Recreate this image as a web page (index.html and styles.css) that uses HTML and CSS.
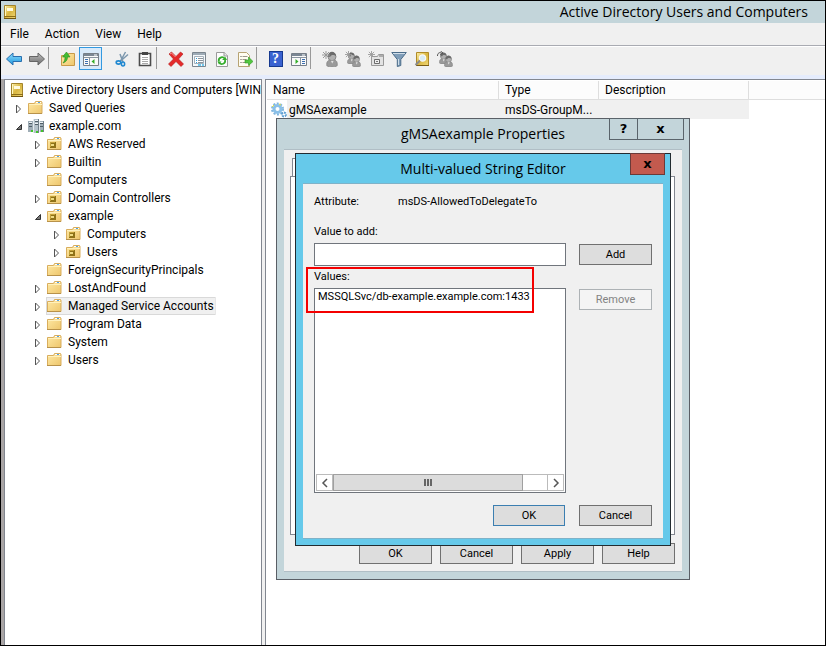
FILE: index.html
```html
<!DOCTYPE html>
<html lang="en">
<head>
<meta charset="utf-8">
<title>Active Directory Users and Computers</title>
<link rel="stylesheet" href="styles.css">
</head>
<body>
<svg class="defs" aria-hidden="true">
  <defs>
    <linearGradient id="gold" x1="0" y1="0" x2="1" y2="1"><stop offset="0" stop-color="#ffeaa6"/><stop offset="1" stop-color="#eec66c"/></linearGradient>
    <linearGradient id="book-fill" x1="0" y1="0" x2="1" y2="1"><stop offset="0" stop-color="#fdf0a8"/><stop offset=".5" stop-color="#d9b640"/><stop offset="1" stop-color="#f0d878"/></linearGradient>
    <linearGradient id="blue-fill" x1="0" y1="0" x2="0" y2="1"><stop offset="0" stop-color="#8fdcfa"/><stop offset="1" stop-color="#1d97e0"/></linearGradient>
    <linearGradient id="gray-fill" x1="0" y1="0" x2="0" y2="1"><stop offset="0" stop-color="#bdbdbd"/><stop offset="1" stop-color="#6c6c6c"/></linearGradient>
    <symbol id="folder" viewBox="0 0 16 16">
      <path d="M.5 3.500h6l1-2h6l.5 1V13.500H.5z" fill="url(#gold)" stroke="#d9ad5c"/>
      <path d="M8 2h5v1H8z" fill="#fff"/><path d="M10 2h2v1h-2z" fill="#4fa3e8"/>
      <path d="M1 4.500h13" stroke="#fff1bd"/><path d="M0 13.500h14" stroke="#b8924a"/>
    </symbol>
    <symbol id="ou" viewBox="0 0 16 16">
      <use href="#folder"/>
      <path d="M3 6h6v6H3z" fill="#8f7218"/><path d="M3 6h5v1H3zM3 7h1v4H3z" fill="#c2a23a"/><path d="M4 8h3v2H4z" fill="#f0dc84"/>
    </symbol>
    <symbol id="book" viewBox="0 0 16 16">
      <path d="M2.500 1.500h11v13h-11z" fill="url(#book-fill)" stroke="#a3842c"/>
      <path d="M5 4h6v3H5z" fill="#fffbe0"/><path d="M2 12.500h12" stroke="#8c6d18"/><path d="M2 14.500h12" stroke="#6f5512"/><path d="M3.500 2v10" stroke="#fff7c0"/>
    </symbol>
    <symbol id="domain" viewBox="0 0 16 16">
      <path d="M0 3h5v11H0zM11 3h5v11h-5z" fill="#9fadb6"/><path d="M5 1h6v14H5z" fill="#b4c1c9"/>
      <path d="M5.500 1v14M11.500 3v11" stroke="#e3eaee"/><path d="M10.500 1v14M15.500 3v11" stroke="#72818a"/>
      <path d="M1 5.500h3M12 5.500h3M7 3.500h3M7 6.500h3M1 8.500h3M12 8.500h3" stroke="#4f5d66"/>
      <path d="M1 4.500h3M12 4.500h3M7 2.500h3M7 5.500h3" stroke="#eef3f6"/>
      <path d="M3 12h2v2H3zM13 12h2v2h-2zM8 13h2v2H8z" fill="#42c52c"/>
    </symbol>
    <symbol id="closed" viewBox="0 0 8 10"><path d="M1.500 1v8l4-4z" fill="#fff" stroke="#555"/></symbol>
    <symbol id="open" viewBox="0 0 8 10"><path d="M6.500 2.500v5h-5z" fill="#777" stroke="#333"/></symbol>
    <symbol id="gear" viewBox="0 0 16 16">
      <circle cx="6.500" cy="7" r="5.500" fill="none" stroke="#7fb5df" stroke-width="2" stroke-dasharray="2 1.500"/>
      <circle cx="6.500" cy="7" r="3.500" fill="#fff" stroke="#8ac0e8" stroke-width="3"/>
      <circle cx="13" cy="12.500" r="2" fill="#fff" stroke="#5f9fd2" stroke-width="2" stroke-dasharray="2 .8"/>
      <path d="M1 5l2-2M8 2l2 1" stroke="#e6e23c"/>
    </symbol>
    <symbol id="person" viewBox="0 0 10 14">
      <path d="M.5 13C0 9 1.500 8 4 8h3c2 0 3 2 2.500 5-2 1.300-7 1.300-9 0z" fill="#9a9a9a" stroke="#858585" stroke-width=".7"/>
      <circle cx="5" cy="5" r="3.500" fill="#b0b0b0" stroke="#808080" stroke-width=".8"/>
      <path d="M1.500 5c0-6 7-5.500 7-.5C7 3 4 3 3.500 5z" fill="#6b6b6b"/><path d="M4 8.500l1.200 2.500 1.300-2.500z" fill="#e2e2e2"/>
    </symbol>
    <symbol id="spark" viewBox="0 0 8 8"><path d="M4 0v8M0 4h8M1 1l6 6M7 1L1 7" stroke="#999"/></symbol>
  </defs>
</svg>

<main class="window">
  <header class="titlebar"><svg class="icon"><use href="#book"/></svg><h1>Active Directory Users and Computers</h1></header>
  <nav class="menubar"><button>File</button><button>Action</button><button>View</button><button>Help</button></nav>

  <div class="toolbar" role="toolbar" aria-label="Standard">
    <button aria-label="Back"><svg viewBox="0 0 16 16"><path d="M.5 8L7 2v3.500h8.500v5H7V14z" fill="url(#blue-fill)" stroke="#2a6fae"/></svg></button>
    <button aria-label="Forward"><svg viewBox="0 0 16 16"><path d="M15.500 8L9 2v3.500H.5v5H9V14z" fill="url(#gray-fill)" stroke="#666"/></svg></button>
    <span class="divider"></span>
    <button aria-label="Up one level"><svg viewBox="0 0 16 16"><path d="M1.500 4.500h6l1-2h6v12h-13z" fill="url(#gold)" stroke="#c99a48"/><path d="M3 12c3-1 4.500-3 4.500-6H10L6.500 1 2.500 6H5c0 3-.5 4-2 6z" fill="#43bd32" stroke="#2a8a20" stroke-width=".6"/></svg></button>
    <button class="pressed" aria-label="Show console tree"><svg viewBox="0 0 16 16"><path d="M.5 2.500h15v12H.5z" fill="#fafafa" stroke="#777f88"/><path d="M1 3h14v2H1z" fill="#7b8794"/><path d="M1 6.500h14M6.500 7v7" stroke="#8a95a0"/><path d="M2 8.500h3M2 10.500h3M2 12.500h3" stroke="#3c6fb0"/><path d="M11.500 8v5l-3-2.500z" fill="#35ae2a"/><path d="M11 4h3" stroke="#fff"/></svg></button>
    <span class="space"></span>
    <button aria-label="Cut"><svg viewBox="0 0 16 16"><path d="M11.500 1L6.500 10M14 3.500L6 10.500M6 3l3 8" fill="none" stroke="#7c97ad" stroke-width="1.500"/><ellipse cx="4.500" cy="11.500" rx="2.300" ry="1.600" fill="none" stroke="#2088d0" stroke-width="1.600"/><ellipse cx="9" cy="13" rx="1.600" ry="2" fill="none" stroke="#2088d0" stroke-width="1.600"/></svg></button>
    <button aria-label="Copy"><svg viewBox="0 0 16 16"><path d="M2.500 2.500h11v12h-11z" fill="#fff" stroke="#4c4c4c" stroke-width="1.600"/><path d="M5 1h6v3H5z" fill="#444"/><path d="M5 6.500h6M5 8.500h6M5 10.500h6M5 12.500h6" stroke="#aaa"/></svg></button>
    <span class="divider"></span>
    <button aria-label="Delete"><svg viewBox="0 0 16 16"><path d="M1 3l2.500-2L8 5.500 12.500 1 15 3l-4.500 5 5 5-2.500 2.500L8 10.500 3 15.500.5 13l5-5z" fill="#e52a2a" stroke="#b01515" stroke-width=".6"/><path d="M2 3l1.500-1 4 4" fill="none" stroke="#f79a9a"/></svg></button>
    <button aria-label="Properties"><svg viewBox="0 0 16 16"><path d="M1.500 1.500h13v14h-13z" fill="#f5f9fc" stroke="#7b858e"/><path d="M2 3h12" stroke="#9eabb6" stroke-width="2"/><path d="M3.500 5.500h9v7h-9z" fill="#fff" stroke="#a5b0ba"/><path d="M5 7.500h1M5 9.500h1M5 11.500h1" stroke="#289ede"/><path d="M7 7.500h5M7 9.500h5M7 11.500h5" stroke="#8a949c"/><path d="M7 14h3M11 14h2" stroke="#46b8e8" stroke-width="1.500"/></svg></button>
    <button aria-label="Refresh"><svg viewBox="0 0 16 16"><path d="M2.500 1.500h8l3 3v11h-11z" fill="#fcfcfc" stroke="#9a9a9a"/><path d="M10 1v4h4" fill="#e4e4e4" stroke="#9a9a9a"/><path d="M4.800 10.500C4 6 10 4.500 11 8.500M11 9c1 4-4 5-5.500 3" fill="none" stroke="#35ad2c" stroke-width="1.800"/><path d="M8 9h5l-1.500-3zM3.500 10.500h4L5 13.500z" fill="#35ad2c"/></svg></button>
    <button aria-label="Export list"><svg viewBox="0 0 16 16"><path d="M1.500 1.500h8l3 3v11h-11z" fill="#fffdf0" stroke="#b7a373"/><path d="M3.500 5.500h1M3.500 8.500h1M3.500 11.500h1" stroke="#555"/><path d="M5.500 5.500h5M5.500 8.500h4M5.500 11.500h4" stroke="#9d968a"/><path d="M8 9h3.500V6l4.500 4.500-4.500 4V12H8z" fill="#54c840" stroke="#2b9422" stroke-width=".6"/></svg></button>
    <span class="divider"></span>
    <button class="help" aria-label="Help topics"><span>?</span></button>
    <button aria-label="Show action pane"><svg viewBox="0 0 16 16"><path d="M.5 2.500h15v12H.5z" fill="#fafafa" stroke="#777f88"/><path d="M1 3h14v2H1z" fill="#7b8794"/><path d="M1 6.500h14M9.500 7v7" stroke="#8a95a0"/><path d="M11 8.500h3M11 10.500h3M11 12.500h3" stroke="#3c6fb0"/><path d="M4.500 8v5l3-2.500z" fill="#35ae2a"/><path d="M11 4h3" stroke="#fff"/></svg></button>
    <span class="divider"></span>
    <button aria-label="New user"><svg viewBox="0 0 16 16"><use href="#person" x="4" y="0" width="12" height="16"/><use href="#spark" x="0" y="0" width="8" height="8"/></svg></button>
    <button aria-label="New group"><svg viewBox="0 0 16 16"><use href="#person" x="2" y="1" width="9" height="12"/><use href="#person" x="7" y="4" width="9" height="12"/><use href="#spark" x="0" y="0" width="7" height="7"/></svg></button>
    <button aria-label="New organizational unit"><svg viewBox="0 0 16 16"><path d="M3.500 5.500h6l1-2h5v11h-12z" fill="#e3e3e3" stroke="#999"/><path d="M6.500 8.500h5v4h-5z" fill="#eee" stroke="#6b6b6b"/><path d="M8 10.500h2M11 5h4" stroke="#777"/><use href="#spark" x="0" y="0" width="7" height="7"/></svg></button>
    <button aria-label="Filter"><svg viewBox="0 0 16 16"><path d="M.8 1.500h14.500l-5.500 7v6l-3.500 1v-7z" fill="#7f9db8" stroke="#4b6c89"/><path d="M2 2.500h12" stroke="#cfdde8"/><path d="M7.500 8v6" stroke="#cfdde8"/></svg></button>
    <button aria-label="Find"><svg viewBox="0 0 16 16"><path d="M2.500 1.500h12v13h-12z" fill="url(#book-fill)" stroke="#b08a28"/><path d="M2 14.500h13" stroke="#7a5c14"/><circle cx="8.500" cy="7" r="3.200" fill="#d9edf8" stroke="#f8f8f8" stroke-width="1.200"/><path d="M6 9.500L1.500 14" stroke="#8a8a8a" stroke-width="2"/></svg></button>
    <button aria-label="Add to a group"><svg viewBox="0 0 16 16"><use href="#person" x="2" y="1" width="9" height="12"/><use href="#person" x="7" y="4" width="9" height="12"/><path d="M.5 5c0-3 2-4 4-3M3.500 0l2.500 2-3 1.500" fill="none" stroke="#555"/></svg></button>
  </div>

  <div class="panes">
    <section class="tree" aria-label="Console tree">
      <ul>
        <li class="root"><svg class="icon"><use href="#book"/></svg><span>Active Directory Users and Computers [WIN</span></li>
        <li><svg class="toggle"><use href="#closed"/></svg><svg class="icon"><use href="#folder"/></svg><span>Saved Queries</span></li>
        <li><svg class="toggle"><use href="#open"/></svg><svg class="icon"><use href="#domain"/></svg><span>example.com</span></li>
        <li class="nest"><ul>
          <li><svg class="toggle"><use href="#closed"/></svg><svg class="icon"><use href="#ou"/></svg><span>AWS Reserved</span></li>
          <li><svg class="toggle"><use href="#closed"/></svg><svg class="icon"><use href="#folder"/></svg><span>Builtin</span></li>
          <li><svg class="toggle"></svg><svg class="icon"><use href="#folder"/></svg><span>Computers</span></li>
          <li><svg class="toggle"><use href="#closed"/></svg><svg class="icon"><use href="#ou"/></svg><span>Domain Controllers</span></li>
          <li><svg class="toggle"><use href="#open"/></svg><svg class="icon"><use href="#ou"/></svg><span>example</span></li>
          <li class="nest"><ul>
            <li><svg class="toggle"><use href="#closed"/></svg><svg class="icon"><use href="#ou"/></svg><span>Computers</span></li>
            <li><svg class="toggle"><use href="#closed"/></svg><svg class="icon"><use href="#ou"/></svg><span>Users</span></li>
          </ul></li>
          <li><svg class="toggle"></svg><svg class="icon"><use href="#folder"/></svg><span>ForeignSecurityPrincipals</span></li>
          <li><svg class="toggle"><use href="#closed"/></svg><svg class="icon"><use href="#folder"/></svg><span>LostAndFound</span></li>
          <li class="selected"><svg class="toggle"><use href="#closed"/></svg><svg class="icon"><use href="#folder"/></svg><span>Managed Service Accounts</span></li>
          <li><svg class="toggle"><use href="#closed"/></svg><svg class="icon"><use href="#folder"/></svg><span>Program Data</span></li>
          <li><svg class="toggle"><use href="#closed"/></svg><svg class="icon"><use href="#folder"/></svg><span>System</span></li>
          <li><svg class="toggle"><use href="#closed"/></svg><svg class="icon"><use href="#folder"/></svg><span>Users</span></li>
        </ul></li>
      </ul>
    </section>
    <section class="list" aria-label="Objects">
      <table>
        <colgroup><col class="col-name"><col class="col-type"><col class="col-desc"><col></colgroup>
        <thead><tr><th>Name</th><th>Type</th><th>Description</th><td></td></tr></thead>
        <tbody><tr><td class="name"><div><svg class="icon"><use href="#gear"/></svg><span>gMSAexample</span></div></td><td>msDS-GroupM...</td><td></td><td class="blank"></td></tr></tbody>
      </table>
    </section>
  </div>
</main>

<section class="dialog properties" role="dialog" aria-label="gMSAexample Properties">
  <div class="caption"><button aria-label="What's this">?</button><button class="close" aria-label="Close properties">x</button></div>
  <h2>gMSAexample Properties</h2>
  <div class="body">
    <div class="tab"></div>
    <div class="sheet"></div>
    <div class="actions"><button>OK</button><button>Cancel</button><button>Apply</button><button>Help</button></div>
  </div>
</section>

<section class="dialog editor" role="dialog" aria-label="Multi-valued String Editor">
  <div class="caption"><button class="close" aria-label="Close editor">x</button></div>
  <h2>Multi-valued String Editor</h2>
  <form class="body">
    <p class="attribute"><span>Attribute:</span><span>msDS-AllowedToDelegateTo</span></p>
    <label for="value">Value to add:</label>
    <div class="field"><input id="value" type="text"><button type="button">Add</button></div>
    <label for="values">Values:</label>
    <div class="field">
      <div class="listbox">
        <select id="values" size="2"><option>MSSQLSvc/db-example.example.com:1433</option></select>
        <div class="scrollbar">
          <button type="button" aria-label="Scroll left"><svg viewBox="0 0 8 10"><path d="M6 1L2 5l4 4" fill="none" stroke="#555" stroke-width="1.500"/></svg></button>
          <div class="track"><div class="thumb"><i></i><i></i><i></i></div></div>
          <button type="button" aria-label="Scroll right"><svg viewBox="0 0 8 10"><path d="M2 1l4 4-4 4" fill="none" stroke="#555" stroke-width="1.500"/></svg></button>
        </div>
      </div>
      <button type="button" disabled>Remove</button>
    </div>
    <div class="actions"><button type="button" class="default">OK</button><button type="button">Cancel</button></div>
  </form>
  <div class="highlight"></div>
</section>
</body>
</html>
```
FILE: styles.css
```css
* { box-sizing: border-box; }

body {
  margin: 0;
  background: #fff;
  color: #000;
  font: 12px/18px Roboto, "Open Sans", sans-serif;
}

button, input, select { font: inherit; color: inherit; border-radius: 0; margin: 0; padding: 0; }
ul { list-style: none; margin: 0; padding: 0; }
h1, h2 { margin: 0; font: 14px/22px "Open Sans", sans-serif; }
.defs { position: absolute; width: 0; height: 0; }
.icon { width: 16px; height: 16px; flex: none; }

/* Main window */
.window {
  display: flex;
  flex-direction: column;
  min-height: 100vh;
  border: 1px solid #000;
  background: #f0f0f0;
}

.titlebar {
  display: flex;
  align-items: center;
  justify-content: space-between;
  height: 22px;
  padding: 0 17px 0 1px;
  background: #c3d5da;
}

.menubar { display: flex; gap: 16px; height: 23px; padding: 0 9px; border-bottom: 1px solid #a9abb2; }
.menubar button { border: 0; background: none; }

.toolbar { display: flex; height: 29px; padding-left: 1px; border-top: 1px solid #fff; }
.toolbar button {
  display: flex;
  align-items: center;
  justify-content: center;
  width: 23px;
  height: 23px;
  border: 1px solid transparent;
  background: none;
}
.toolbar svg { width: 16px; height: 16px; flex: none; }
.toolbar .pressed { border-color: #3399e0; background: #d9eafa; }
.divider { width: 8px; height: 22px; border-left: 1px solid #999; }
.space { width: 8px; }
.help span {
  width: 14px;
  border: 1px solid #16398f;
  background: #3a62d0;
  color: #fff;
  font: bold 14px/14px "Liberation Serif", serif;
}

.panes {
  display: flex;
  flex: 1;
  gap: 3px;
  padding: 4px 0 0 3px;
  background: linear-gradient(#e5ecfc 4px, transparent 4px), linear-gradient(90deg, #a9a5a5 3px, #f0f0f0 3px);
}

/* Console tree */
.tree {
  flex: none;
  width: 258px;
  overflow: hidden;
  padding: 1px 0 0 6px;
  border: 1px solid #828790;
  border-bottom: 0;
  background: #fff;
  white-space: nowrap;
}
.tree li { display: flex; align-items: center; height: 18px; }
.tree .nest { display: block; height: auto; padding-left: 19px; }
.tree li > span { padding: 0 3px 0 5px; }
.tree .root > span { padding-right: 0; }
.tree .root .icon { margin-left: -2px; }
.toggle { width: 8px; height: 10px; flex: none; margin: 2px 5px 0 4px; }
.tree .selected > span, .tree .selected > .icon { background: #f0f0f0; box-shadow: 0 0 0 1px #d9d9d9; clip-path: inset(-1px -1px -1px 0); }
.tree .selected > .icon { clip-path: inset(-1px 0 -1px -1px); }
.tree .selected > span { padding-right: 1px; line-height: 16px; }

/* Object list */
.list { flex: 1; min-width: 0; padding: 1px 0 0 1px; border: 1px solid #828790; border-width: 1px 0 0 1px; background: #fff; }
.list table { width: 100%; table-layout: fixed; border-collapse: separate; border-spacing: 0; }
.col-name { width: 232px; }
.col-type { width: 100px; }
.col-desc { width: 150px; }
.list th, .list td { height: 19px; padding: 0 6px; font-weight: 400; line-height: 18px; text-align: left; white-space: nowrap; overflow: hidden; }
.list thead > tr > * { border-bottom: 1px solid #dedede; background: #fcfcfc; }
.list th { border-right: 1px solid #dedede; }
.list tbody td { background: #f0f0f0; }
.list tbody .name { padding: 0 0 0 4px; background: linear-gradient(90deg, #fff 20px, #f0f0f0 20px); }
.name div { display: flex; align-items: center; gap: 2px; }
.list tbody .blank { background: #fff; }

/* Dialogs */
.dialog { position: absolute; display: flex; flex-direction: column; }
.dialog h2 { height: 30px; line-height: 29px; text-align: center; }
.dialog .body { display: flex; flex: 1; flex-direction: column; background: #f0f0f0; font: 11px/14px Roboto, sans-serif; }
.body button { width: 73px; height: 21px; border: 1px solid #707070; background: #ddd; }
.body button:disabled { border-color: #adb2b5; background: #f4f4f4; color: #838383; }
.body .default { width: 72px; border-color: #3c7fb1; }

.caption { position: absolute; top: -1px; right: 5px; display: flex; }
.caption button { width: 29px; height: 22px; margin-left: -1px; border: 1px solid #5a646b; background: transparent; font: bold 13px/16px "DejaVu Sans", sans-serif; }
.caption .close { width: 47px; }

.properties { left: 276px; top: 118px; width: 414px; height: 462px; padding: 0 7px 7px; border: 1px solid #5a5f66; background: #c3d5da; }
.properties .body { padding: 8px 7px 7px 6px; border: 1px solid #b0bec5; border-width: 1px 0; }
.tab { height: 18px; width: 80px; margin-left: 2px; border: 1px solid #828790; border-bottom: 0; background: #fff; }
.sheet { flex: 1; border: 1px solid #828790; background: #fff; }
.actions { display: flex; justify-content: flex-end; gap: 8px; margin-top: 8px; }

.editor { left: 295px; top: 153px; width: 376px; height: 393px; padding: 0 7px 7px; border: 1px solid #222b30; background: #66c9ea; }
.editor .caption { right: 5px; }
.editor .close { width: 35px; border-color: #6b3a38; background: #c35a4e; }
.editor .body { padding: 11px 11px 12px; border: 1px solid #7fb2c8; border-width: 1px 0; }
.attribute { display: flex; margin: 0 0 16px; }
.attribute span:first-child { width: 84px; }
.body label { margin-bottom: 4px; }
.field { display: flex; gap: 13px; justify-content: space-between; }
.field input, .listbox { flex: 1; min-width: 0; border: 1px solid #70757c; background: #fff; }
.field input { height: 23px; margin-bottom: 4px; }
.field > button { margin-top: 1px; }
.listbox { display: flex; flex-direction: column; height: 205px; padding: 1px; }
.listbox select { flex: 1; min-height: 0; border: 0; outline: 0; overflow: hidden; background: none; }
.listbox option { padding: 0 2px; }
.scrollbar { display: flex; height: 17px; }
.scrollbar button { display: flex; align-items: center; justify-content: center; width: 17px; height: 17px; border-color: #bbb; background: #fff; }
.scrollbar svg { width: 8px; height: 10px; }
.track { flex: 1; border: 1px solid #bbb; border-width: 1px 0; }
.thumb { display: flex; align-items: center; justify-content: center; gap: 1px; width: 89%; height: 17px; margin-top: -1px; border: 1px solid #a0a0a0; background: #dcdcdc; }
.thumb i { width: 2px; height: 7px; background: #666; }
.editor .actions { gap: 14px; margin-top: 12px; }
.highlight { position: absolute; left: 10px; top: 113px; width: 228px; height: 46px; border: 2px solid #f40000; pointer-events: none; }
```
